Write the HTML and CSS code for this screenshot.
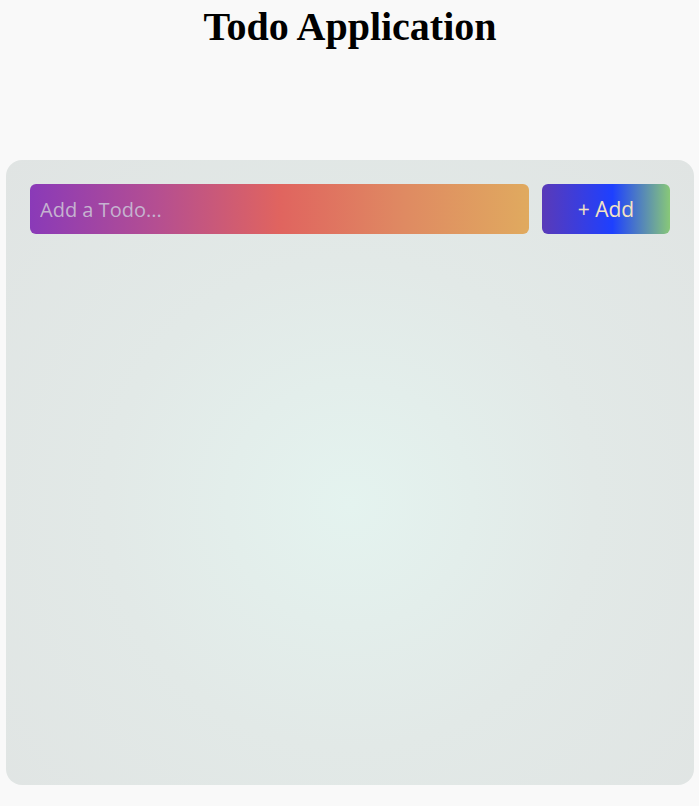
FILE: index.html
```html
<!DOCTYPE html>
<html>
<head>
<meta charset="utf-8">
<link rel="stylesheet" href="styles.css">
</head>
<body>
<h1 class="title">Todo Application</h1>
<div class="card">
  <div class="row">
    <input class="todo-input" type="text" placeholder="Add a Todo...">
    <button class="add-btn">+ Add</button>
  </div>
</div>
</body>
</html>
```
FILE: styles.css
```css
html, body { margin: 0; padding: 0; }
body {
  background: #f9f9f9;
  font-family: "Liberation Serif", serif;
  padding: 0 5px 0 6px;
}
.title {
  margin: 0;
  padding-top: 4px;
  height: 160px;
  box-sizing: border-box;
  text-align: center;
  font-size: 40px;
  font-weight: bold;
  line-height: 46px;
  color: #000;
}
.card {
  height: 625px;
  box-sizing: border-box;
  border-radius: 16px;
  padding: 24px 24px;
  background: radial-gradient(ellipse at 50% 55%, #e4f3ef 0%, #e2e9e7 50%, #e0e4e3 100%);
}
.row {
  display: flex;
  gap: 13px;
}
.todo-input {
  flex: 1;
  height: 50px;
  box-sizing: border-box;
  border: none;
  outline: none;
  border-radius: 6px;
  padding: 0 10px;
  font-family: "Open Sans", "Noto Sans", sans-serif;
  font-size: 20px;
  color: #eee;
  background: linear-gradient(90deg, #8a3ab8 0%, #b44e92 25%, #e0645f 50%, #df8a62 75%, #e0aa5f 100%);
}
.todo-input::placeholder { color: #c5b3d0; opacity: 1; }
.add-btn {
  width: 128px;
  height: 50px;
  border: none;
  border-radius: 6px;
  font-family: "Open Sans", "Noto Sans", sans-serif;
  font-size: 21px;
  color: #f3e3c3;
  background: linear-gradient(90deg, #5a3ab8 0%, #1e40ff 55%, #88c878 100%);
  cursor: pointer;
}
```
